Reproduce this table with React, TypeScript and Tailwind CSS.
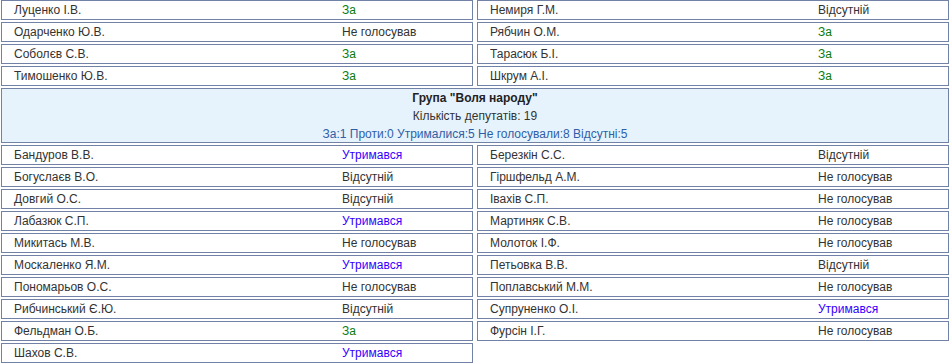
type Vote = "За" | "Не голосував" | "Відсутній" | "Утримався";

type Row = { name: string; vote: Vote };

const topLeft: Row[] = [
  { name: "Луценко І.В.", vote: "За" },
  { name: "Одарченко Ю.В.", vote: "Не голосував" },
  { name: "Соболєв С.В.", vote: "За" },
  { name: "Тимошенко Ю.В.", vote: "За" },
];

const topRight: Row[] = [
  { name: "Немиря Г.М.", vote: "Відсутній" },
  { name: "Рябчин О.М.", vote: "За" },
  { name: "Тарасюк Б.І.", vote: "За" },
  { name: "Шкрум А.І.", vote: "За" },
];

const groupLeft: Row[] = [
  { name: "Бандуров В.В.", vote: "Утримався" },
  { name: "Богуслаєв В.О.", vote: "Відсутній" },
  { name: "Довгий О.С.", vote: "Відсутній" },
  { name: "Лабазюк С.П.", vote: "Утримався" },
  { name: "Микитась М.В.", vote: "Не голосував" },
  { name: "Москаленко Я.М.", vote: "Утримався" },
  { name: "Пономарьов О.С.", vote: "Не голосував" },
  { name: "Рибчинський Є.Ю.", vote: "Відсутній" },
  { name: "Фельдман О.Б.", vote: "За" },
  { name: "Шахов С.В.", vote: "Утримався" },
];

const groupRight: Row[] = [
  { name: "Березкін С.С.", vote: "Відсутній" },
  { name: "Гіршфельд А.М.", vote: "Не голосував" },
  { name: "Іваxів С.П.".replace("x", "х"), vote: "Не голосував" },
  { name: "Мартиняк С.В.", vote: "Не голосував" },
  { name: "Молоток І.Ф.", vote: "Не голосував" },
  { name: "Петьовка В.В.", vote: "Відсутній" },
  { name: "Поплавський М.М.", vote: "Не голосував" },
  { name: "Супруненко О.І.", vote: "Утримався" },
  { name: "Фурсін І.Г.", vote: "Не голосував" },
];

function voteColor(v: Vote) {
  if (v === "За") return "text-[#0a7a0a]";
  if (v === "Утримався") return "text-[#3300ff]";
  return "text-[#333333]";
}

function DeputyRow({ row }: { row: Row }) {
  return (
    <div className="flex h-[20px] items-center border border-[#7282a6] bg-white pl-3 leading-[18px]">
      <span className="w-[328px] shrink-0 text-[#333333]">{row.name}</span>
      <span className={voteColor(row.vote)}>{row.vote}</span>
    </div>
  );
}

function Column({ rows }: { rows: Row[] }) {
  return (
    <div className="flex flex-col gap-[2px]">
      {rows.map((r) => (
        <DeputyRow key={r.name} row={r} />
      ))}
    </div>
  );
}

export default function App() {
  return (
    <div
      className="h-[363px] w-[951px] overflow-hidden bg-white pl-px text-[12px]"
      style={{ fontFamily: '"Liberation Sans", Arial, sans-serif' }}
    >
      {/* Previous group (tail) */}
      <div className="grid grid-cols-[472px_472px] gap-x-[4px]">
        <Column rows={topLeft} />
        <Column rows={topRight} />
      </div>

      {/* Group header */}
      <div className="mt-[2px] flex h-[55px] w-[948px] flex-col items-center justify-center border border-[#7282a6] bg-[#e6f3fc] leading-[18px]">
        <p className="font-bold text-[#222222]">Група "Воля народу"</p>
        <p className="text-[#333333]">Кількість депутатів: 19</p>
        <p className="text-[#2f5ea8]">
          За:1 Проти:0 Утрималися:5 Не голосували:8 Відсутні:5
        </p>
      </div>

      {/* Group members */}
      <div className="mt-[2px] grid grid-cols-[472px_472px] items-start gap-x-[4px]">
        <Column rows={groupLeft} />
        <Column rows={groupRight} />
      </div>
    </div>
  );
}
